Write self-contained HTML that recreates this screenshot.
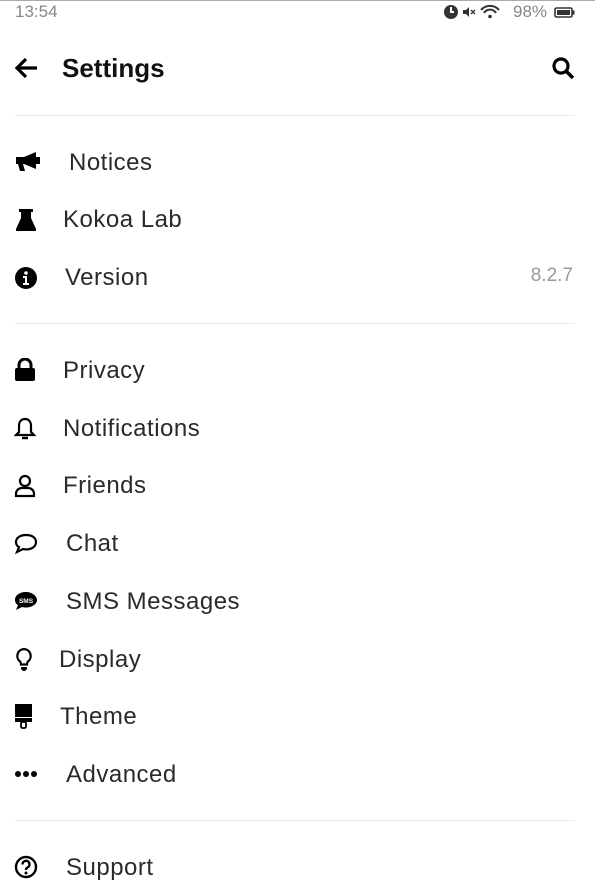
<!DOCTYPE html>
<html><head><meta charset="utf-8"><style>
html,body{margin:0;padding:0;background:#fff;width:595px;height:889px;overflow:hidden;position:relative;font-family:"Liberation Sans",sans-serif}
.top{position:absolute;left:0;top:0;width:595px;height:1px;background:#aaa}
.t{position:absolute;font-size:24px;color:#2a2a2a;line-height:30px;letter-spacing:0.5px}
.ic{position:absolute}
.hr{position:absolute;left:15px;width:560px;height:1px;background:#ececec}
</style></head><body>
<div class="top"></div>
<div style="position:absolute;left:15px;top:2px;font-size:17px;color:#888">13:54</div>
<svg class="ic" style="left:443px;top:4px" width="135" height="16" viewBox="0 0 135 16">
<circle cx="8" cy="8" r="7" fill="#333"/><path d="M8 3v5h3" stroke="#fff" stroke-width="2" fill="none"/>
<path d="M20 6h3l3-3v10l-3-3h-3z" fill="#333"/><path d="M28 6l4 4M32 6l-4 4" stroke="#333" stroke-width="1.3"/>
<path d="M38 6a12 12 0 0 1 18 0M41 9a7 7 0 0 1 12 0" stroke="#333" stroke-width="2" fill="none"/><circle cx="47" cy="12.5" r="1.8" fill="#333"/>
<rect x="112" y="4" width="17" height="9" rx="1.5" fill="none" stroke="#333" stroke-width="1.6"/><rect x="114" y="6" width="13" height="5" fill="#333"/><rect x="129.5" y="6.5" width="2" height="4" fill="#333"/>
</svg>
<div style="position:absolute;left:513px;top:2px;font-size:17px;color:#888">98%</div>
<svg class="ic" style="left:14px;top:56px" width="26" height="24" viewBox="0 0 26 24"><path d="M23 12H4M12 3l-9 9 9 9" stroke="#000" stroke-width="3.2" fill="none"/></svg>
<div style="position:absolute;left:62px;top:53px;font-size:26px;font-weight:bold;color:#111">Settings</div>
<svg class="ic" style="left:551px;top:56px" width="24" height="24" viewBox="0 0 24 24"><circle cx="10" cy="10" r="7" stroke="#000" stroke-width="3.2" fill="none"/><path d="M15 15l7 7" stroke="#000" stroke-width="3.5"/></svg>
<div class="hr" style="top:115px"></div>

<svg class="ic" style="left:14px;top:151px" width="28" height="22" viewBox="0 0 28 22"><path d="M2 6h8l12-5v17l-12-5H9l2 7H6l-2-7H2z" fill="#000"/><rect x="22" y="6" width="4" height="7" fill="#000"/></svg>
<div class="t" style="left:69px;top:148px">Notices</div>
<svg class="ic" style="left:15px;top:208px" width="22" height="24" viewBox="0 0 22 24"><path d="M4 1h14v3h-2v6l5 11v2H1v-2l5-11V4H4z" fill="#000"/></svg>
<div class="t" style="left:63px;top:205px">Kokoa Lab</div>
<svg class="ic" style="left:14px;top:266px" width="24" height="24" viewBox="0 0 24 24"><circle cx="12" cy="12" r="11" fill="#000"/><circle cx="12" cy="7" r="1.8" fill="#fff"/><path d="M9 10h4v7h2v2H9v-2h2v-5H9z" fill="#fff"/></svg>
<div class="t" style="left:65px;top:263px">Version</div>
<div style="position:absolute;right:22px;top:265px;font-size:19px;color:#999">8.2.7</div>
<div class="hr" style="top:323px"></div>

<svg class="ic" style="left:14px;top:358px" width="22" height="24" viewBox="0 0 22 24"><path d="M5 11V7a6 6 0 0 1 12 0v4" stroke="#000" stroke-width="3" fill="none"/><rect x="1" y="10" width="20" height="13" rx="2" fill="#000"/></svg>
<div class="t" style="left:63px;top:356px">Privacy</div>
<svg class="ic" style="left:14px;top:417px" width="22" height="24" viewBox="0 0 22 24"><path d="M11 2c-4 0-6 3-6 7v6l-3 3h18l-3-3V9c0-4-2-7-6-7z" stroke="#000" stroke-width="2.2" fill="none"/><path d="M8 21h6" stroke="#000" stroke-width="2.5"/></svg>
<div class="t" style="left:63px;top:414px">Notifications</div>
<svg class="ic" style="left:14px;top:474px" width="22" height="24" viewBox="0 0 22 24"><circle cx="11" cy="7" r="5" stroke="#000" stroke-width="2.2" fill="none"/><path d="M2 22v-2c0-4 3-6 6-6h6c3 0 6 2 6 6v2z" stroke="#000" stroke-width="2.2" fill="none"/></svg>
<div class="t" style="left:63px;top:471px">Friends</div>
<svg class="ic" style="left:14px;top:533px" width="24" height="22" viewBox="0 0 24 22"><path d="M12 2C6 2 2 5 2 9c0 2 1 4 3 5l-2 5 6-3c1 .3 2 .4 3 .4 6 0 10-3 10-7.4S18 2 12 2z" stroke="#000" stroke-width="2.2" fill="none"/></svg>
<div class="t" style="left:66px;top:529px">Chat</div>
<svg class="ic" style="left:14px;top:591px" width="24" height="22" viewBox="0 0 24 22"><path d="M12 1C6 1 1 4 1 9c0 2 1 4 3 5l-2 5 6-3c1 .3 2 .5 4 .5 6 0 11-3.5 11-7.5S18 1 12 1z" fill="#000"/><text x="12" y="12" font-size="6.5" font-weight="bold" fill="#fff" text-anchor="middle" font-family="Liberation Sans">SMS</text></svg>
<div class="t" style="left:66px;top:587px">SMS Messages</div>
<svg class="ic" style="left:14px;top:647px" width="20" height="26" viewBox="0 0 20 26"><path d="M10 2a7 7 0 0 0-4 12.5c1 1 1 2 1 3h6c0-1 0-2 1-3A7 7 0 0 0 10 2z" stroke="#000" stroke-width="2.2" fill="none"/><path d="M7 20h6v2l-2 2H9l-2-2z" fill="#000"/></svg>
<div class="t" style="left:59px;top:645px">Display</div>
<svg class="ic" style="left:15px;top:704px" width="20" height="26" viewBox="0 0 20 26"><rect x="0" y="0" width="17" height="13" fill="#000"/><rect x="0" y="14" width="17" height="4" fill="#000"/><rect x="6" y="18" width="5" height="6" rx="1.5" stroke="#000" stroke-width="1.8" fill="none"/></svg>
<div class="t" style="left:60px;top:702px">Theme</div>
<svg class="ic" style="left:14px;top:769px" width="26" height="10" viewBox="0 0 26 10"><circle cx="4" cy="5" r="3" fill="#000"/><circle cx="12" cy="5" r="3" fill="#000"/><circle cx="20" cy="5" r="3" fill="#000"/></svg>
<div class="t" style="left:66px;top:760px">Advanced</div>
<div class="hr" style="top:820px"></div>
<svg class="ic" style="left:14px;top:855px" width="24" height="24" viewBox="0 0 24 24"><circle cx="12" cy="12" r="10" stroke="#000" stroke-width="2.4" fill="none"/><path d="M8.5 9.5a3.5 3.5 0 1 1 5 3c-1 .5-1.5 1-1.5 2.5" stroke="#000" stroke-width="2.4" fill="none"/><circle cx="12" cy="18" r="1.5" fill="#000"/></svg>
<div class="t" style="left:66px;top:853px">Support</div>
</body></html>
